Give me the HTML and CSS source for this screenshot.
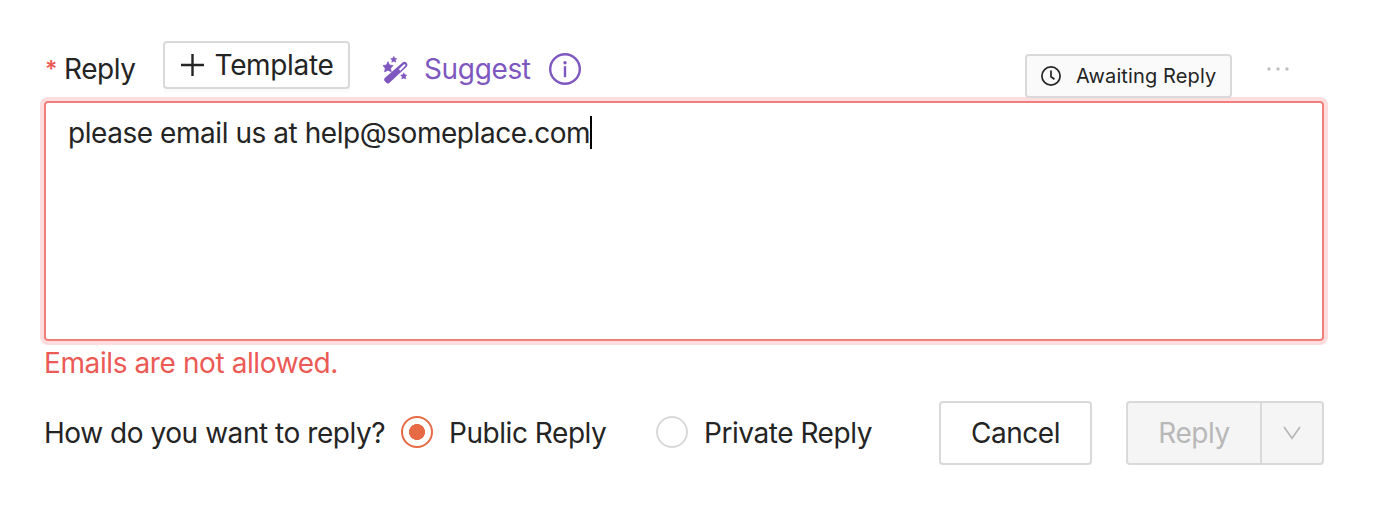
FILE: index.html
```html
<!DOCTYPE html>
<html lang="en">
<head>
    <meta charset="UTF-8">
    <meta name="viewport" content="width=device-width, initial-scale=1.0">
    <title>Reply</title>
    <link rel="stylesheet" href="styles.css">
</head>
<body>

    <form class="reply-form">
        <div class="toolbar">
            <label class="label"><span class="required">*</span><span class="label-text">Reply</span></label>
            <button type="button" class="btn template-btn">
                <svg width="24" height="24" viewBox="0 0 24 24" fill="none" stroke="currentColor" stroke-width="2.4"><path d="M12.5 1v22M1 12h23"/></svg>
                <span>Template</span>
            </button>
            <div class="suggest">
                <svg class="wand" width="26" height="28" viewBox="0 0 26 28" fill="currentColor">
                    <path fill-rule="evenodd" d="M19.6 6.6Q21.6 5 23.5 6.8Q25.2 8.6 23.7 10.7L6.3 27Q4.8 28.2 3.2 26.7L1.6 25Q.4 23.2 2 21.7ZM21 8.2L15.8 13.2L17.4 14.7L22.5 9.6Q22.6 7.8 21 8.2Z"/>
                    <path d="M5 5.6L6.6 8.9L10.2 9.5L7.7 12.2L8.3 15.9L5 14.2L1.5 15.9L2.2 12.2L-.2 9.6L3.4 8.9Z" stroke="currentColor" stroke-width=".6"/>
                    <path d="M10.8 .4L11.7 2.2L13.8 2.6L12.3 4.1L12.7 6.2L10.8 5.2L8.8 6.2L9.2 4.1L7.7 2.6L9.9 2.2Z" stroke="currentColor" stroke-width=".6"/>
                    <path d="M20.8 16.8L21.7 18.8L23.8 19.1L22.3 20.7L22.7 22.9L20.8 21.9L18.8 22.9L19.2 20.7L17.7 19.1L19.9 18.8Z" stroke="currentColor" stroke-width=".6"/>
                </svg>
                <span class="suggest-text">Suggest</span>
                <svg class="info" width="32" height="32" viewBox="0 0 32 32" fill="none" stroke="currentColor" stroke-width="2.4"><circle cx="16" cy="16" r="14.8"/><path d="M16 13.2v11"/><circle cx="16" cy="9.7" r="1.7" fill="currentColor" stroke="none"/></svg>
            </div>
            <div class="status">
                <svg width="20" height="20" viewBox="0 0 20 20" fill="none" stroke="currentColor" stroke-width="1.7"><circle cx="10" cy="10" r="9.1"/><path d="M10 4.6v6.2l3.5 2.5"/></svg>
                <span>Awaiting Reply</span>
            </div>
            <svg class="more" width="22" height="4" viewBox="0 0 22 4" fill="currentColor"><circle cx="2" cy="2" r="1.7"/><circle cx="11" cy="2" r="1.7"/><circle cx="20" cy="2" r="1.7"/></svg>
        </div>

        <div class="message"><span class="message-text">please email us at help@someplace.com</span><span class="caret"></span></div>
        <div class="error"><span>Emails are not allowed.</span></div>

        <div class="footer">
            <span class="question">How do you want to reply?</span>
            <label class="option public"><span class="radio checked"></span><span>Public Reply</span></label>
            <label class="option private"><span class="radio"></span><span>Private Reply</span></label>
            <button type="button" class="btn cancel-btn">Cancel</button>
            <div class="reply-group">
                <button type="button" class="reply-btn" disabled>Reply</button>
                <button type="button" class="reply-menu" disabled>
                    <svg width="18" height="14" viewBox="0 0 18 14" fill="none" stroke="currentColor" stroke-width="1.7"><path d="M1 1L9 12.2L17 1"/></svg>
                </button>
            </div>
        </div>
    </form>

</body>
</html>
```

FILE: styles.css
```css
* {
    box-sizing: border-box;
}
body {
    margin: 0;
    background-color: #fff;
    color: #242424;
    font-family: Inter, "Liberation Sans", sans-serif;
    font-size: 28px;
    line-height: 44px;
    letter-spacing: -0.45px;
}
button {
    font: inherit;
    letter-spacing: inherit;
    color: inherit;
    padding: 0;
    margin: 0;
}
span {
    white-space: nowrap;
}
svg {
    display: block;
    flex: none;
}
.reply-form {
    width: 1280px;
    margin: 41px 0 0 44px;
}
.toolbar {
    display: flex;
    align-items: flex-start;
    height: 60px;
}
.label {
    display: flex;
    width: 119px;
    padding-top: 6px;
}
.required {
    width: 20px;
    padding-left: 1px;
    color: #eb5a55;
    font-size: 23px;
    font-weight: 600;
    line-height: 44px;
}
.btn {
    display: flex;
    align-items: center;
    justify-content: center;
    background-color: #fff;
    border: 2px solid #d9d9d9;
    border-radius: 4px;
    box-shadow: 0 4px 0 rgba(0, 0, 0, 0.015);
}
.template-btn {
    width: 187px;
    height: 48px;
    gap: 11px;
}
.template-btn span {
    letter-spacing: -0.35px;
}
.suggest {
    display: flex;
    align-items: center;
    height: 44px;
    margin: 6px 0 0 33px;
    color: #7e57bf;
}
.wand {
    margin-top: 2px;
}
.suggest-text {
    width: 125px;
    margin-left: 15px;
    letter-spacing: -0.35px;
}
.status {
    display: flex;
    align-items: center;
    width: 207px;
    height: 44px;
    margin: 13px 0 0 auto;
    padding-left: 14px;
    gap: 15px;
    background-color: #fafafa;
    border: 2px solid #d9d9d9;
    border-radius: 4px;
    font-size: 20px;
    letter-spacing: 0.12px;
}
.more {
    margin: 26px 35px 0 35px;
    color: #bfbfbf;
}
.message {
    display: flex;
    height: 240px;
    padding: 8px 22px;
    border: 2px solid #f07f7b;
    border-radius: 4px;
    box-shadow: 0 0 0 4px #fddddd;
}
.caret {
    width: 2px;
    height: 33px;
    margin-top: 5px;
    background-color: #000;
}
.error {
    height: 60px;
    color: #eb5a55;
    letter-spacing: -0.4px;
}
.footer {
    display: flex;
    align-items: center;
    height: 64px;
}
.question {
    width: 357px;
}
.option {
    display: flex;
    align-items: center;
    gap: 16px;
}
.public {
    width: 255px;
}
.radio {
    width: 32px;
    height: 32px;
    margin-top: -2px;
    border: 2px solid #d9d9d9;
    border-radius: 50%;
}
.radio.checked {
    border-color: #e66a45;
    background: radial-gradient(circle, #e66a45 7.7px, #fff 8.3px);
}
.cancel-btn {
    width: 153px;
    height: 64px;
    margin-left: auto;
}
.reply-group {
    display: flex;
    width: 198px;
    height: 64px;
    margin-left: 34px;
    border: 2px solid #d9d9d9;
    border-radius: 4px;
    background-color: #f5f5f5;
    color: #b8b8b8;
}
.reply-btn {
    width: 134px;
    border: none;
    border-right: 2px solid #d9d9d9;
    background: none;
}
.reply-menu {
    display: flex;
    flex: 1;
    align-items: center;
    justify-content: center;
    border: none;
    background: none;
}
```
